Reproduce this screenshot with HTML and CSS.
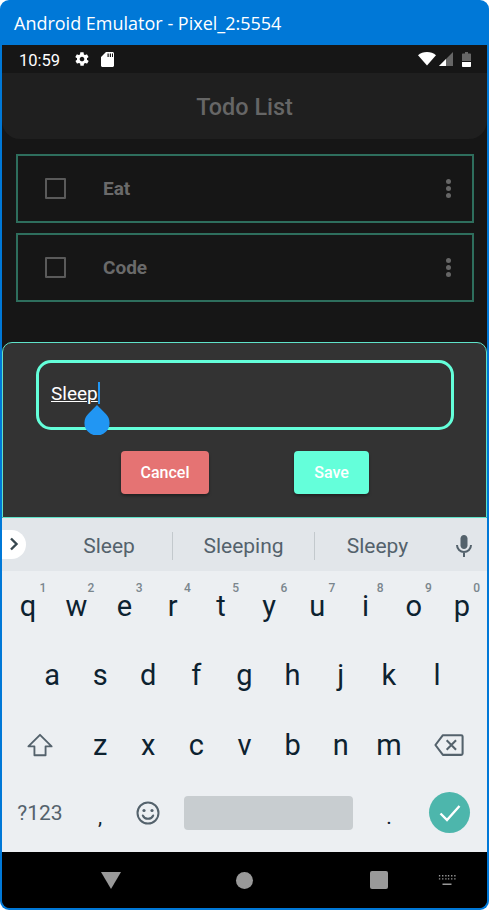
FILE: index.html
```html
<!DOCTYPE html>
<html lang="en">
<head>
    <meta charset="UTF-8">
    <title>Android Emulator - Pixel_2:5554</title>
    <link rel="stylesheet" href="styles.css">
</head>
<body>
<div class="window">
    <div class="titlebar">Android Emulator - Pixel_2:5554</div>
    <div class="screen">
        <div class="statusbar">
            <span class="time">10:59</span>
            <svg class="st-gear" width="16" height="16" viewBox="0 0 24 24"><path fill="#fff" d="M19.4 13c.1-.3.1-.7.1-1s0-.7-.1-1l2.1-1.6c.2-.2.2-.4.1-.6l-2-3.5c-.1-.2-.4-.3-.6-.2l-2.5 1c-.5-.4-1.100-.7-1.700-1l-.4-2.700c0-.2-.2-.4-.5-.4h-4c-.2 0-.5.2-.5.4l-.4 2.700c-.6.2-1.200.6-1.700 1l-2.500-1c-.2-.1-.5 0-.6.2l-2 3.500c-.1.2-.1.5.1.6L4.600 11c-.1.300-.1.700-.1 1s0 .7.1 1l-2.100 1.600c-.2.2-.2.4-.1.6l2 3.500c.1.2.4.3.6.2l2.500-1c.5.4 1.100.7 1.700 1l.4 2.700c0 .2.2.4.5.4h4c.2 0 .5-.2.5-.4l.4-2.700c.6-.2 1.200-.6 1.700-1l2.500 1c.2.100.5 0 .6-.2l2-3.500c.1-.2.1-.5-.1-.6L19.400 13zM12 15.500c-1.900 0-3.500-1.600-3.500-3.500s1.600-3.500 3.500-3.500 3.500 1.600 3.500 3.500-1.600 3.500-3.500 3.500z"/></svg>
            <svg class="st-sd" width="13" height="15" viewBox="0 0 13 15"><path fill="#fff" d="M5 0h6.500c.8 0 1.500.7 1.500 1.500v12c0 .8-.7 1.500-1.500 1.500h-10C.7 15 0 14.300 0 13.500V5zM6.500 1.500v3.500h1.200V1.500zM8.800 1.500v3.500H10V1.500zM11 1.500v3.500h1V1.500z"/></svg>
            <span class="st-space"></span>
            <svg class="st-wifi" width="18" height="14" viewBox="0 0 18 14"><path fill="#fff" d="M9 13.500 0 3.200C2.400 1.200 5.500 0 9 0s6.600 1.200 9 3.200z"/></svg>
            <svg class="st-signal" width="14" height="14" viewBox="0 0 14 14"><path fill="#666" d="M14 0v14H0z"/><path fill="#fff" d="M7 7v7H0z"/></svg>
            <svg class="st-battery" width="9" height="15" viewBox="0 0 9 15"><path fill="#666" d="M3 0h3v1.500h2c.6 0 1 .4 1 1V9H0V2.500c0-.6.4-1 1-1h2z"/><path fill="#fff" d="M0 10h9v4c0 .6-.4 1-1 1H1c-.6 0-1-.4-1-1z"/></svg>
        </div>
        <div class="appbar">Todo List</div>
        <div class="list">
            <div class="todo">
                <span class="checkbox"></span>
                <span class="todo-text">Eat</span>
                <span class="dots"><i></i><i></i><i></i></span>
            </div>
            <div class="todo">
                <span class="checkbox"></span>
                <span class="todo-text">Code</span>
                <span class="dots"><i></i><i></i><i></i></span>
            </div>
        </div>
        <div class="dialog">
            <div class="field">
                <span class="typed">Sleep</span><span class="caret"></span>
                <svg class="handle" width="26" height="30" viewBox="0 0 26 31"><path fill="#2196f3" d="M13 0 22.200 9.300A13 13 0 1 1 3.800 9.300z"/></svg>
            </div>
            <div class="actions">
                <button class="btn btn-cancel">Cancel</button>
                <button class="btn btn-save">Save</button>
            </div>
        </div>
        <div class="keyboard">
            <div class="suggestions">
                <span class="expand">
                    <svg width="10" height="14" viewBox="0 0 10 14"><path fill="none" stroke="#37474f" stroke-width="2.400" d="M2 1.500 7.500 7 2 12.500"/></svg>
                </span>
                <span class="word">Sleep</span>
                <span class="word word-mid">Sleeping</span>
                <span class="word">Sleepy</span>
                <span class="mic">
                    <svg width="18" height="24" viewBox="0 0 18 24"><path fill="#54626c" d="M9 15c2 0 3.500-1.600 3.500-3.500v-7C12.500 2.600 11 1 9 1S5.500 2.600 5.500 4.500v7C5.500 13.400 7 15 9 15z"/><path fill="none" stroke="#54626c" stroke-width="2" d="M2 11c0 4 3.200 7 7 7s7-3 7-7M9 18v5"/></svg>
                </span>
            </div>
            <div class="key-row">
                <span class="key">q<sup>1</sup></span>
                <span class="key">w<sup>2</sup></span>
                <span class="key">e<sup>3</sup></span>
                <span class="key">r<sup>4</sup></span>
                <span class="key">t<sup>5</sup></span>
                <span class="key">y<sup>6</sup></span>
                <span class="key">u<sup>7</sup></span>
                <span class="key">i<sup>8</sup></span>
                <span class="key">o<sup>9</sup></span>
                <span class="key">p<sup>0</sup></span>
            </div>
            <div class="key-row row-two">
                <span class="key">a</span>
                <span class="key">s</span>
                <span class="key">d</span>
                <span class="key">f</span>
                <span class="key">g</span>
                <span class="key">h</span>
                <span class="key">j</span>
                <span class="key">k</span>
                <span class="key">l</span>
            </div>
            <div class="key-row row-three">
                <span class="key key-left">
                    <svg width="26" height="26" viewBox="0 0 28 26"><path fill="none" stroke="#54626c" stroke-width="2" stroke-linejoin="round" d="M14 2 1.500 14.500H8V24h12v-9.500h6.500z"/></svg>
                </span>
                <span class="key">z</span>
                <span class="key">x</span>
                <span class="key">c</span>
                <span class="key">v</span>
                <span class="key">b</span>
                <span class="key">n</span>
                <span class="key">m</span>
                <span class="key key-right">
                    <svg width="30" height="24" viewBox="0 0 32 24"><path fill="none" stroke="#54626c" stroke-width="2.200" stroke-linejoin="round" d="M9.500 1.500H29c.8 0 1.500.7 1.500 1.500v18c0 .8-.7 1.500-1.500 1.500H9.500L1.500 12z"/><path fill="none" stroke="#54626c" stroke-width="2.200" d="m13.500 7 10 10m0-10-10 10"/></svg>
                </span>
            </div>
            <div class="key-row">
                <span class="key key-left key-sym">?123</span>
                <span class="key key-punct">,</span>
                <span class="key">
                    <svg width="24" height="24" viewBox="0 0 24 24"><circle cx="12" cy="12" r="10.500" fill="none" stroke="#54626c" stroke-width="2"/><circle cx="8" cy="9.500" r="1.600" fill="#54626c"/><circle cx="16" cy="9.500" r="1.600" fill="#54626c"/><path fill="none" stroke="#54626c" stroke-width="2" stroke-linecap="round" d="M6.800 14.500c1 2.200 3 3.300 5.200 3.300s4.200-1.100 5.200-3.300"/></svg>
                </span>
                <span class="spacebar-wrap"><span class="spacebar"></span></span>
                <span class="key key-punct">.</span>
                <span class="key key-right">
                    <span class="enter">
                        <svg width="22" height="18" viewBox="0 0 22 18"><path fill="none" stroke="#fff" stroke-width="2.400" d="m1.500 9.500 6.500 6.500L20.500 2"/></svg>
                    </span>
                </span>
            </div>
        </div>
        <div class="navbar">
            <svg class="nav-back" width="20" height="17" viewBox="0 0 20 17"><path fill="#999" d="M0 0h20L10 17z"/></svg>
            <span class="nav-home"></span>
            <span class="nav-recent"></span>
            <svg class="nav-kbd" width="18" height="10" viewBox="0 0 20 11"><path fill="#999" d="M1 0h1.500v1.500H1zM4.500 0H6v1.500H4.500zM8 0h1.500v1.500H8zM11 0h1.500v1.500H11zM14.500 0H16v1.500h-1.500zM18 0h1.500v1.500H18zM1 3.500h1.500V5H1zM4.500 3.500H6V5H4.500zM8 3.500h1.500V5H8zM11 3.500h1.500V5H11zM14.500 3.500H16V5h-1.500zM18 3.500h1.500V5H18zM5 9.500h10V11H5z"/></svg>
        </div>
    </div>
</div>
</body>
</html>
```

FILE: styles.css
```css
html, body {
    margin: 0;
    padding: 0;
    background-color: #fff;
}

body {
    font-family: 'Roboto', sans-serif;
}

.window {
    width: 489px;
    height: 910px;
    box-sizing: border-box;
    background-color: #0078d7;
    border-radius: 9px;
    padding: 0 2px 2px;
    display: flex;
    flex-direction: column;
    overflow: hidden;
}

.titlebar {
    height: 45px;
    flex: none;
    padding-left: 12px;
    color: #fff;
    font-family: 'Open Sans', sans-serif;
    font-size: 18px;
    line-height: 47px;
    white-space: nowrap;
}

.screen {
    flex: 1;
    display: flex;
    flex-direction: column;
    background-color: #161616;
    border-radius: 0 0 8px 8px;
    overflow: hidden;
}

/* status bar */
.statusbar {
    height: 28px;
    flex: none;
    display: flex;
    align-items: center;
    padding: 0 16px 0 17px;
    color: #fff;
    font-size: 16.5px;
}

.time {
    width: 41px;
    margin-top: 2px;
}

.st-gear {
    margin-left: 14px;
}

.st-sd {
    margin-left: 11px;
}

.st-space {
    flex: 1;
}

.st-signal {
    margin-left: 3px;
}

.st-battery {
    margin-left: 9px;
}

/* app bar */
.appbar {
    height: 66px;
    flex: none;
    background-color: #1f1f1f;
    border-radius: 0 0 18px 18px;
    color: #666;
    font-size: 23.4px;
    font-weight: 500;
    line-height: 69px;
    text-align: center;
}

/* list */
.list {
    height: 203px;
    flex: none;
    box-sizing: border-box;
    padding: 15px 13px 0 14px;
    display: flex;
    flex-direction: column;
    gap: 10px;
}

.todo {
    height: 69px;
    box-sizing: border-box;
    border: 2px solid #2e6e5d;
    display: flex;
    align-items: center;
    padding-left: 27px;
}

.checkbox {
    width: 21px;
    height: 21px;
    box-sizing: border-box;
    border: 2px solid #5a5a5a;
    border-radius: 1px;
}

.todo-text {
    flex: 1;
    margin-left: 37px;
    color: #6a6a6a;
    font-size: 19px;
    font-weight: 700;
}

.dots {
    display: flex;
    flex-direction: column;
    gap: 2px;
    margin-right: 21px;
}

.dots i {
    display: block;
    width: 5px;
    height: 5px;
    border-radius: 50%;
    background-color: #666;
}

/* dialog */
.dialog {
    height: 176px;
    flex: none;
    box-sizing: border-box;
    background-color: #333;
    border: 1px solid #5fe3c9;
    border-radius: 10px 10px 0 0;
    padding: 17px 32px 0 33px;
}

.field {
    position: relative;
    height: 70px;
    box-sizing: border-box;
    border: 3px solid #64ffda;
    border-radius: 15px;
    padding: 20px 0 0 12px;
    color: #fff;
    font-size: 19px;
    line-height: 22px;
    display: flex;
    align-items: flex-start;
}

.typed {
    text-decoration: underline;
    text-decoration-thickness: 1px;
}

.caret {
    width: 2px;
    height: 22px;
    margin-top: -1px;
    background-color: #2196f3;
}

.handle {
    position: absolute;
    left: 45px;
    top: 42px;
}

.actions {
    display: flex;
    margin-top: 21px;
    padding-left: 85px;
    gap: 85px;
}

.btn {
    height: 43px;
    padding: 0;
    border: none;
    border-radius: 4px;
    color: #fff;
    font-family: 'Roboto', sans-serif;
    font-size: 16px;
    font-weight: 500;
    box-shadow: 0 2px 3px rgba(0, 0, 0, 0.35);
}

.btn-cancel {
    width: 88px;
    background-color: #e57373;
}

.btn-save {
    width: 75px;
    background-color: #64ffda;
}

/* keyboard */
.keyboard {
    height: 334px;
    flex: none;
    background-color: #eceff2;
    color: #0d2230;
}

.suggestions {
    height: 53px;
    box-sizing: border-box;
    padding-top: 2px;
    background-color: #e2e6ea;
    display: grid;
    grid-template-columns: 44px 126px 143px 125px 1fr;
    align-items: center;
    color: #54626c;
    font-size: 21px;
}

.expand {
    width: 24px;
    height: 29px;
    margin-top: -3px;
    background-color: #fff;
    border-radius: 0 15px 15px 0;
    display: flex;
    align-items: center;
    justify-content: center;
}

.word {
    text-align: center;
    line-height: 28px;
}

.word-mid {
    border-left: 1px solid #c3c9cd;
    border-right: 1px solid #c3c9cd;
}

.mic {
    display: flex;
    justify-content: center;
}

.key-row {
    height: 69px;
    padding: 0 1px 0 2px;
    display: flex;
    align-items: stretch;
}

.row-two {
    padding: 0 26px;
}

.row-three {
    padding-top: 2px;
    box-sizing: border-box;
}

.key {
    position: relative;
    flex: 1 1 0;
    display: flex;
    align-items: center;
    justify-content: center;
    font-size: 29px;
}

.key sup {
    position: absolute;
    top: 10px;
    right: 6px;
    color: #7a868d;
    font-size: 12px;
    font-weight: 500;
    line-height: 14px;
}

.key-left {
    flex: 0 0 72px;
}

.key-right {
    flex: 0 0 73px;
}

.key-sym {
    color: #54626c;
    font-size: 21px;
}

.key-punct {
    font-size: 21px;
    padding-top: 8px;
}

.spacebar-wrap {
    flex: 0 0 193px;
    display: flex;
    align-items: center;
    justify-content: center;
}

.spacebar {
    width: 169px;
    height: 34px;
    background-color: #c8cdd0;
    border-radius: 4px;
}

.enter {
    width: 41px;
    height: 41px;
    border-radius: 50%;
    background-color: #4db6ac;
    display: flex;
    align-items: center;
    justify-content: center;
}

/* nav bar */
.navbar {
    flex: 1;
    background-color: #000;
    display: flex;
    align-items: center;
    padding-left: 99px;
}

.nav-home {
    width: 17px;
    height: 17px;
    margin-left: 115px;
    border-radius: 50%;
    background-color: #999;
}

.nav-recent {
    width: 18px;
    height: 18px;
    margin-left: 117px;
    border-radius: 2px;
    background-color: #999;
}

.nav-kbd {
    margin-left: 50px;
}
```
